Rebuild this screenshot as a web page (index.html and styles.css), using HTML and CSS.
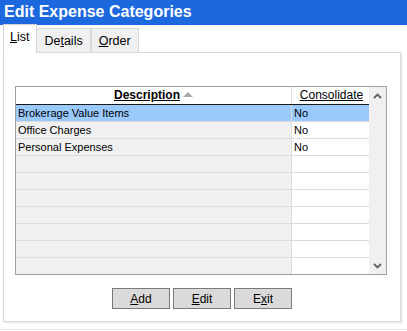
FILE: index.html
```html
<!DOCTYPE html>
<html>
<head>
<meta charset="utf-8">
<link rel="stylesheet" href="styles.css">
</head>
<body>
<div class="window">
  <div class="titlebar">Edit Expense Categories</div>
  <div class="tabs">
    <div class="tab active"><u>L</u>ist</div>
    <div class="tab">De<u>t</u>ails</div>
    <div class="tab"><u>O</u>rder</div>
  </div>
  <div class="panel">
    <div class="grid">
      <div class="table">
        <div class="row header">
          <div class="cell desc"><span class="hd-desc">Description</span><span class="sort"></span></div>
          <div class="cell cons"><span class="hd-cons">Consolidate</span></div>
        </div>
        <div class="row selected"><div class="cell desc">Brokerage Value Items</div><div class="cell cons">No</div></div>
        <div class="row"><div class="cell desc">Office Charges</div><div class="cell cons">No</div></div>
        <div class="row"><div class="cell desc">Personal Expenses</div><div class="cell cons">No</div></div>
        <div class="row"><div class="cell desc"></div><div class="cell cons"></div></div>
        <div class="row"><div class="cell desc"></div><div class="cell cons"></div></div>
        <div class="row"><div class="cell desc"></div><div class="cell cons"></div></div>
        <div class="row"><div class="cell desc"></div><div class="cell cons"></div></div>
        <div class="row"><div class="cell desc"></div><div class="cell cons"></div></div>
        <div class="row"><div class="cell desc"></div><div class="cell cons"></div></div>
        <div class="row last"><div class="cell desc"></div><div class="cell cons"></div></div>
      </div>
      <div class="scrollbar">
        <svg class="chev" width="9" height="6" viewBox="0 0 9 6"><path d="M1 5 L4.5 1.5 L8 5" fill="none" stroke="#606060" stroke-width="1.8"/></svg>
        <svg class="chev" width="9" height="6" viewBox="0 0 9 6"><path d="M1 1 L4.5 4.5 L8 1" fill="none" stroke="#606060" stroke-width="1.8"/></svg>
      </div>
    </div>
    <div class="buttons">
      <button class="btn"><u>A</u>dd</button>
      <button class="btn"><u>E</u>dit</button>
      <button class="btn">E<u>x</u>it</button>
    </div>
  </div>
  <div class="footer-line"></div>
</div>
</body>
</html>
```

FILE: styles.css
```css
html, body {
  margin: 0;
  padding: 0;
  background: #ffffff;
}
body {
  width: 407px;
  height: 331px;
  overflow: hidden;
  font-family: "Liberation Sans", Arial, sans-serif;
  color: #000;
}
.window {
  display: flex;
  flex-direction: column;
  height: 331px;
}
.titlebar {
  height: 25px;
  line-height: 24px;
  background: #1c68df;
  color: #ffffff;
  font-weight: bold;
  font-size: 16px;
  padding-left: 4px;
  white-space: nowrap;
}
.tabs {
  display: flex;
  align-items: flex-end;
  height: 27px;
  padding-left: 3px;
  position: relative;
  z-index: 2;
}
.tab {
  height: 23px;
  line-height: 24px;
  padding: 0 7px 0 7px;
  font-size: 12.5px;
  background: #f0f0f0;
  border: 1px solid #d9d9d9;
  border-bottom: none;
  margin-left: 0;
  box-sizing: content-box;
}
.tab.active {
  height: 28px;
  line-height: 25px;
  background: #ffffff;
  margin-bottom: -1px;
  padding: 0 7px 0 6px;
  border-color: #d4d4d4;
}
.tab + .tab { margin-left: 0; }
.tab.active + .tab { border-left: none; }
.tab u { text-decoration: underline; text-underline-offset: 1px; }
.panel {
  margin-left: 3px;
  width: 373px;
  height: 235px;
  border: 1px solid #d9d9d9;
  box-shadow: 1px 1px 0 #ececec, 2px 2px 0 #f4f4f4;
  padding: 33px 12px 0 11px;
  box-sizing: content-box;
  display: flex;
  flex-direction: column;
  position: relative;
  z-index: 1;
}
.grid {
  display: flex;
  width: 370px;
  height: 187px;
  border: 1px solid #a0a0a0;
  background: #f0f0f0;
}
.table {
  display: flex;
  flex-direction: column;
  width: 353px;
}
.row {
  display: flex;
  height: 16px;
  border-bottom: 1px solid #dcdcdc;
  font-size: 11px;
  line-height: 16px;
}
.row.last { border-bottom: none; }
.cell.desc {
  width: 273px;
  padding-left: 2px;
  background: #f0f0f0;
  white-space: nowrap;
}
.cell.cons {
  width: 75px;
  padding-left: 2px;
  border-left: 1px solid #dcdcdc;
  background: #ffffff;
}
.row.selected .cell { background: #99c9fd; }
.row.header {
  height: 17px;
  line-height: 17px;
  border-bottom: 1px solid #1a1a1a;
  font-size: 12px;
}
.row.header .cell {
  background: #ffffff;
  display: flex;
  justify-content: center;
  align-items: center;
}
.row.header .cell.desc { padding-left: 0; width: 275px; }
.row.header .cell.cons { padding-left: 0; width: 77px; }
.hd-desc {
  font-weight: bold;
  text-decoration: underline;
}
.hd-cons {
  text-decoration: underline;
  margin-left: 2px;
}
.sort {
  display: inline-block;
  width: 0;
  height: 0;
  border-left: 5px solid transparent;
  border-right: 5px solid transparent;
  border-bottom: 5px solid #a8a8a8;
  margin-left: 3px;
  margin-bottom: 2px;
}
.scrollbar {
  width: 17px;
  background: #f0f0f0;
  display: flex;
  flex-direction: column;
  justify-content: space-between;
  align-items: center;
  padding: 6px 0 5px;
  box-sizing: border-box;
}
.chev { display: block; }
.buttons {
  display: flex;
  justify-content: center;
  gap: 3px;
  margin-top: 13px;
  padding-left: 1px;
}
.btn {
  width: 58px;
  height: 21px;
  margin: 0;
  padding: 0;
  border: 1px solid #7a7a7a;
  background: #dadada;
  font-family: "Liberation Sans", Arial, sans-serif;
  font-size: 12px;
  color: #000;
  border-radius: 0;
}
.footer-line {
  margin-top: 7px;
  height: 1px;
  background: #e6e6e6;
}
```
